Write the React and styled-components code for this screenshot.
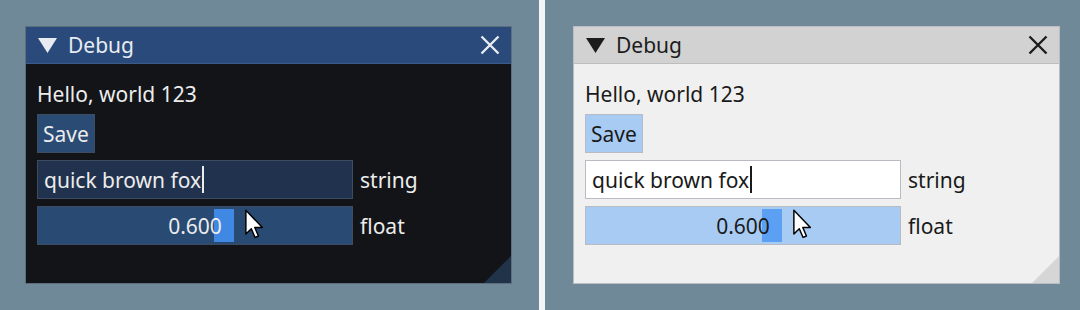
import React from 'react';
import styled, { createGlobalStyle, ThemeProvider } from 'styled-components';

const GlobalStyle = createGlobalStyle`
  html, body { margin: 0; padding: 0; background: #708999; }
  body { font-family: "Noto Sans", "Open Sans", sans-serif; }
`;

const dark = {
  windowBg: '#121418',
  windowBorder: '#5d6e7e',
  titleBg: '#294a7a',
  titleText: '#e8ecf2',
  titleLine: '#3b5b88',
  text: '#ececec',
  buttonBg: '#2a4b74',
  frameBg: '#20324d',
  frameHover: '#294a72',
  frameBorder: '#3e4c62',
  grab: '#3f88e4',
  grip: '#213349',
  caret: '#ececec',
};

const light = {
  windowBg: '#f0f0f0',
  windowBorder: '#b9bec3',
  titleBg: '#d2d2d2',
  titleText: '#1c1c1c',
  titleLine: '#bdbdbd',
  text: '#1a1a1a',
  buttonBg: '#a8cbf4',
  frameBg: '#ffffff',
  frameHover: '#a8cbf4',
  frameBorder: '#b8bcc2',
  grab: '#5ba0f2',
  grip: '#d6d6d6',
  caret: '#1a1a1a',
};

const Page = styled.div`
  display: flex;
  width: 1080px;
  height: 310px;
  background: #708999;
  overflow: hidden;
`;

const Half = styled.div`
  width: ${p => p.$w}px;
  padding: 26px 0 0 ${p => p.$pad}px;
  box-sizing: border-box;
  flex: none;
`;

const Divider = styled.div`
  width: 6px;
  flex: none;
  background: #f3f5f6;
`;

const Window = styled.div`
  position: relative;
  width: 487px;
  height: 258px;
  box-sizing: border-box;
  border: 1px solid ${p => p.theme.windowBorder};
  background: ${p => p.theme.windowBg};
  display: flex;
  flex-direction: column;
  overflow: hidden;
`;

const TitleBar = styled.div`
  height: 36px;
  flex: none;
  display: flex;
  align-items: center;
  padding: 0 11px 0 12px;
  background: ${p => p.theme.titleBg};
  border-bottom: 1px solid ${p => p.theme.titleLine};
  color: ${p => p.theme.titleText};
  font-size: 21px;
`;

const TitleText = styled.span`
  flex: 1;
  margin-left: 11px;
  line-height: 36px;
`;

const Body = styled.div`
  display: flex;
  flex-direction: column;
  gap: 7px;
  padding: 17px 11px 0 11px;
  color: ${p => p.theme.text};
  font-size: 21px;
`;

const TextRow = styled.div`
  height: 26px;
  line-height: 26px;
  white-space: nowrap;
`;

const Row = styled.div`
  display: flex;
  align-items: center;
  gap: 7px;
  height: 39px;
`;

const Button = styled.div`
  height: 39px;
  box-sizing: border-box;
  padding: 0 5px;
  display: flex;
  align-items: center;
  background: ${p => p.theme.buttonBg};
  border: 1px solid ${p => p.theme.frameBorder};
`;

const Frame = styled.div`
  position: relative;
  width: 316px;
  height: 39px;
  box-sizing: border-box;
  display: flex;
  align-items: center;
  justify-content: ${p => (p.$center ? 'center' : 'flex-start')};
  padding: 0 6px;
  background: ${p => (p.$hover ? p.theme.frameHover : p.theme.frameBg)};
  border: 1px solid ${p => p.theme.frameBorder};
  white-space: nowrap;
`;

const Caret = styled.span`
  display: inline-block;
  width: 2px;
  height: 27px;
  margin-left: 1px;
  background: ${p => p.theme.caret};
`;

const Grab = styled.div`
  position: absolute;
  top: 2px;
  bottom: 2px;
  width: 20px;
  background: ${p => p.theme.grab};
`;

const Value = styled.span`
  position: relative;
  z-index: 1;
`;

const Pointer = styled.svg`
  position: absolute;
  left: 207px;
  top: 2px;
  z-index: 2;
`;

const Label = styled.span`
  white-space: nowrap;
`;

const Grip = styled.div`
  position: absolute;
  right: 0;
  bottom: 0;
  width: 27px;
  height: 27px;
  background: ${p => p.theme.grip};
  clip-path: polygon(100% 0, 100% 100%, 0 100%);
`;

const Triangle = ({ color }) => (
  <svg width="19" height="15" viewBox="0 0 19 15">
    <polygon points="0,0 19,0 9.5,15" fill={color} />
  </svg>
);

const CloseIcon = ({ color }) => (
  <svg width="20" height="20" viewBox="0 0 20 20">
    <path d="M1.5 1.5 L18.5 18.5 M18.5 1.5 L1.5 18.5" stroke={color} strokeWidth="2.4" fill="none" />
  </svg>
);

const DebugWindow = ({ theme }) => {
  const value = 0.6;
  const grabLeft = 3 + value * (316 - 2 - 6 - 20);
  return (
    <ThemeProvider theme={theme}>
      <Window>
        <TitleBar>
          <Triangle color={theme.titleText} />
          <TitleText>Debug</TitleText>
          <CloseIcon color={theme.titleText} />
        </TitleBar>
        <Body>
          <TextRow>Hello, world 123</TextRow>
          <Row>
            <Button>Save</Button>
          </Row>
          <Row>
            <Frame>
              quick brown fox<Caret />
            </Frame>
            <Label>string</Label>
          </Row>
          <Row>
            <Frame $hover $center>
              <Grab style={{ left: `${grabLeft}px` }} />
              <Value>0.600</Value>
              <Pointer width="19" height="30" viewBox="0 0 13 20">
                <path
                  d="M0.6 0.6 L0.6 16.8 L4.3 13.3 L6.9 19.2 L9.2 18.2 L6.7 12.4 L11.9 12.4 Z"
                  fill="#ffffff"
                  stroke="#000000"
                  strokeWidth="1"
                  strokeLinejoin="round"
                />
              </Pointer>
            </Frame>
            <Label>float</Label>
          </Row>
        </Body>
        <Grip />
      </Window>
    </ThemeProvider>
  );
};

export default function App() {
  return (
    <>
      <GlobalStyle />
      <Page>
        <Half $w={539} $pad={25}>
          <DebugWindow theme={dark} />
        </Half>
        <Divider />
        <Half $w={535} $pad={28}>
          <DebugWindow theme={light} />
        </Half>
      </Page>
    </>
  );
}
